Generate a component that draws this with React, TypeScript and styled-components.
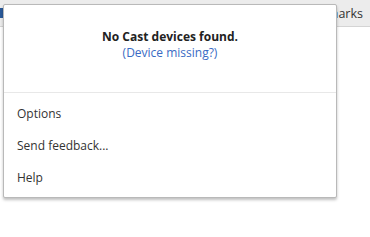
import React from 'react';
import styled, { createGlobalStyle } from 'styled-components';

const GlobalStyle = createGlobalStyle`
  html, body {
    margin: 0;
    padding: 0;
    background: #ffffff;
    font-family: "Open Sans", "Noto Sans", Arial, sans-serif;
  }
`;

const Page = styled.div`
  position: relative;
  width: 370px;
  height: 237px;
  overflow: hidden;
  background: #ffffff;
`;

const BookmarksBar = styled.div`
  height: 27px;
  background: #ececec;
  border-bottom: 1px solid #d4d4d4;
  display: flex;
  align-items: center;
  gap: 60px;
  padding: 0 7px 0 0;
  box-sizing: border-box;
`;

const BookmarkIcon = styled.span<{ $left: number }>`
  width: 12px;
  height: 10px;
  margin-left: ${(p) => p.$left}px;
  background: #2a5a9a;
  border-radius: 1px;
`;

const OtherBookmarks = styled.span`
  margin-left: auto;
  font-size: 12.5px;
  color: #333;
`;

const Popup = styled.div`
  position: absolute;
  top: 4px;
  left: 3px;
  width: 334px;
  box-sizing: border-box;
  background: #fff;
  border: 1px solid #b9b9b9;
  border-radius: 2px;
  box-shadow: 0 2px 3px rgba(0, 0, 0, 0.25);
`;

const Header = styled.div`
  padding: 24px 0 31px;
  text-align: center;
  border-bottom: 1px solid #e8e8e8;
`;

const Title = styled.div`
  font-size: 12px;
  line-height: 16px;
  font-weight: 700;
  color: #222;
`;

const DeviceLink = styled.a`
  display: block;
  font-size: 12px;
  line-height: 16px;
  color: #3a6bc4;
  text-decoration: none;
`;

const Menu = styled.ul`
  list-style: none;
  margin: 0;
  padding: 4px 0 4px;
`;

const MenuItem = styled.li`
  height: 32px;
  display: flex;
  align-items: center;
  padding-left: 13px;
  font-size: 12px;
  color: #333;
`;

const items = ['Options', 'Send feedback...', 'Help'];

export default function App() {
  return (
    <Page>
      <GlobalStyle />
      <BookmarksBar>
        <BookmarkIcon $left={-8} />
        <BookmarkIcon $left={0} />
        <BookmarkIcon $left={0} />
        <OtherBookmarks>Other bookmarks</OtherBookmarks>
      </BookmarksBar>
      <Popup>
        <Header>
          <Title>No Cast devices found.</Title>
          <DeviceLink href="#">(Device missing?)</DeviceLink>
        </Header>
        <Menu>
          {items.map((item) => (
            <MenuItem key={item}>{item}</MenuItem>
          ))}
        </Menu>
      </Popup>
    </Page>
  );
}
